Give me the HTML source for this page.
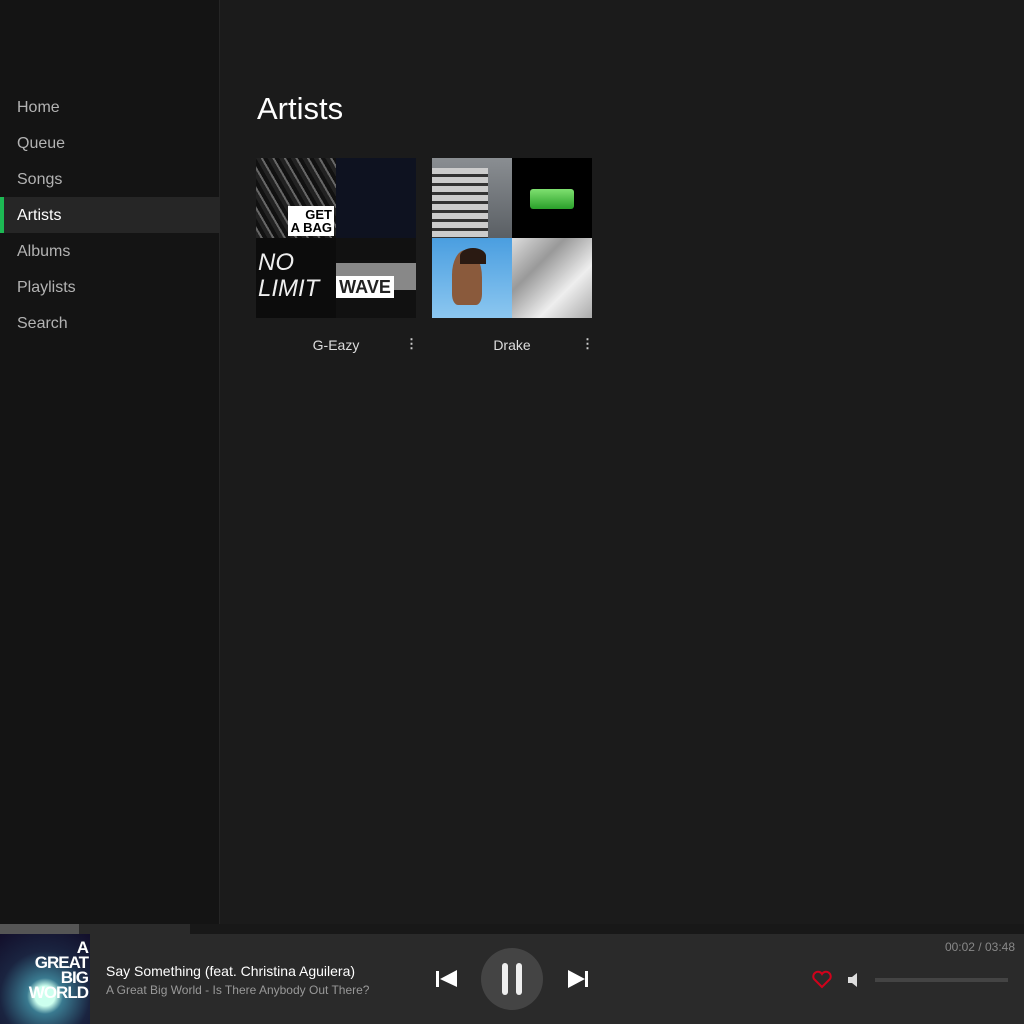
<!DOCTYPE html>
<html><head><style>
*{margin:0;padding:0;box-sizing:border-box}
body{width:1024px;height:1024px;background:#1b1b1b;font-family:"Liberation Sans",sans-serif;position:relative;overflow:hidden}
.side{position:absolute;left:0;top:0;width:220px;height:924px;background:#141414;border-right:1px solid #252525}
.nav{position:absolute;left:0;width:220px;height:36px;line-height:38px;padding-left:17px;font-size:16px;color:#b3b3b3}
.nav.act{background:#262626;color:#fff;border-left:4px solid #1db954;padding-left:13px}
h1{position:absolute;left:257px;top:91px;font-size:31px;font-weight:normal;color:#fff}
.t{position:absolute;width:80px;height:80px;overflow:hidden}
.lbl{position:absolute;font-size:14px;color:#ddd;text-align:center;width:160px;top:337px}
.dots{position:absolute;top:336px;color:#ccc;font-size:13px;font-weight:bold}
.prog{position:absolute;top:924px;left:0;width:1024px;height:10px;background:#181818}
.bar{position:absolute;top:934px;left:0;width:1024px;height:90px;background:#2a2a2a}
</style></head><body>
<div class="side">
<div class="nav" style="top:89px">Home</div>
<div class="nav" style="top:125px">Queue</div>
<div class="nav" style="top:161px">Songs</div>
<div class="nav act" style="top:197px">Artists</div>
<div class="nav" style="top:233px">Albums</div>
<div class="nav" style="top:269px">Playlists</div>
<div class="nav" style="top:305px">Search</div>
</div>
<h1>Artists</h1>
<div class="t" style="left:256px;top:158px;background:repeating-linear-gradient(60deg,#222 0 4px,#666 4px 6px,#111 6px 10px)"><div style="position:absolute;left:32px;top:48px;width:46px;height:30px;background:#fff;color:#000;font-weight:bold;font-size:13px;line-height:13px;text-align:right;padding:2px">GET<br>A BAG</div></div>
<div class="t" style="left:336px;top:158px;background:#0e1220"></div>
<div class="t" style="left:256px;top:238px;background:#0c0c0c;color:#eee;font-size:24px;line-height:26px;padding:12px 0 0 2px;font-style:italic">NO<br>LIMIT</div>
<div class="t" style="left:336px;top:238px;background:linear-gradient(#111 0 25px,#888 25px 52px,#111 52px)"><div style="position:absolute;left:0;top:38px;width:58px;height:22px;background:#fff;color:#222;font-weight:bold;font-size:18px;text-align:center;line-height:22px">WAVE</div></div>
<div class="t" style="left:432px;top:158px"><div style="position:absolute;inset:0;background:linear-gradient(#8a8e92,#5a5f64)"></div><div style="position:absolute;left:0;top:10px;width:56px;height:70px;background:repeating-linear-gradient(#ccc 0 6px,#333 6px 9px)"></div></div>
<div class="t" style="left:512px;top:158px;background:#000"><div style="position:absolute;left:18px;top:31px;width:44px;height:20px;border-radius:3px;background:linear-gradient(#7fe070,#2aa02a)"></div></div>
<div class="t" style="left:432px;top:238px;background:linear-gradient(#4a9ee0,#8cc7f0)"><div style="position:absolute;left:20px;top:12px;width:30px;height:55px;border-radius:45% 50% 20% 20%;background:#8a5a3c"></div><div style="position:absolute;left:28px;top:10px;width:26px;height:16px;border-radius:50% 50% 0 0;background:#2a1a12"></div></div>
<div class="t" style="left:512px;top:238px;background:linear-gradient(135deg,#ddd,#999,#eee,#aaa)"></div>
<div class="lbl" style="left:256px">G-Eazy</div><div class="dots" style="left:405px">⋮</div>
<div class="lbl" style="left:432px">Drake</div><div class="dots" style="left:581px">⋮</div>
<div class="prog"><div style="position:absolute;left:0;top:0;width:79px;height:10px;background:#555"></div><div style="position:absolute;left:79px;top:0;width:111px;height:10px;background:#2a2a2a"></div></div>
<div class="bar">
<div style="position:absolute;left:0;top:0;width:90px;height:90px;background:radial-gradient(circle at 45px 62px,#cfe 0 10px,#3a7a90 18px,#1a2440 45px,#120e2a);color:#fff;font-weight:bold;font-size:17px;line-height:15px;text-align:right;padding:6px 2px 0 0;letter-spacing:-1px">A<br>GREAT<br>BIG<br>WORLD</div>
<div style="position:absolute;left:106px;top:29px;color:#fff;font-size:14px">Say Something (feat. Christina Aguilera)</div>
<div style="position:absolute;left:106px;top:49px;color:#999;font-size:12px">A Great Big World - Is There Anybody Out There?</div>
<svg style="position:absolute;left:430px;top:13px" width="170" height="64"><path d="M6 36h3v16H6zM10 44l17-9v17z" fill="#fff" transform="translate(0,-12)"/><circle cx="82" cy="32" r="31" fill="#444"/><rect x="72" y="16" width="6" height="32" rx="3" fill="#eee"/><rect x="86" y="16" width="6" height="32" rx="3" fill="#eee"/><path d="M138 23l17 9-17 9zM155 24h3v16h-3z" fill="#fff"/></svg>
<div style="position:absolute;right:9px;top:6px;color:#888;font-size:12px">00:02 / 03:48</div>
<svg style="position:absolute;left:811px;top:36px" width="22" height="20"><path d="M11 17L3 9a4.5 4.5 0 0 1 8-5a4.5 4.5 0 0 1 8 5z" fill="none" stroke="#d0021b" stroke-width="2"/></svg>
<svg style="position:absolute;left:847px;top:38px" width="14" height="16"><path d="M1 5h4l5-4v14l-5-4H1z" fill="#ddd"/></svg>
<div style="position:absolute;left:875px;top:44px;width:133px;height:4px;background:#444"></div>
</div>
</body></html>
